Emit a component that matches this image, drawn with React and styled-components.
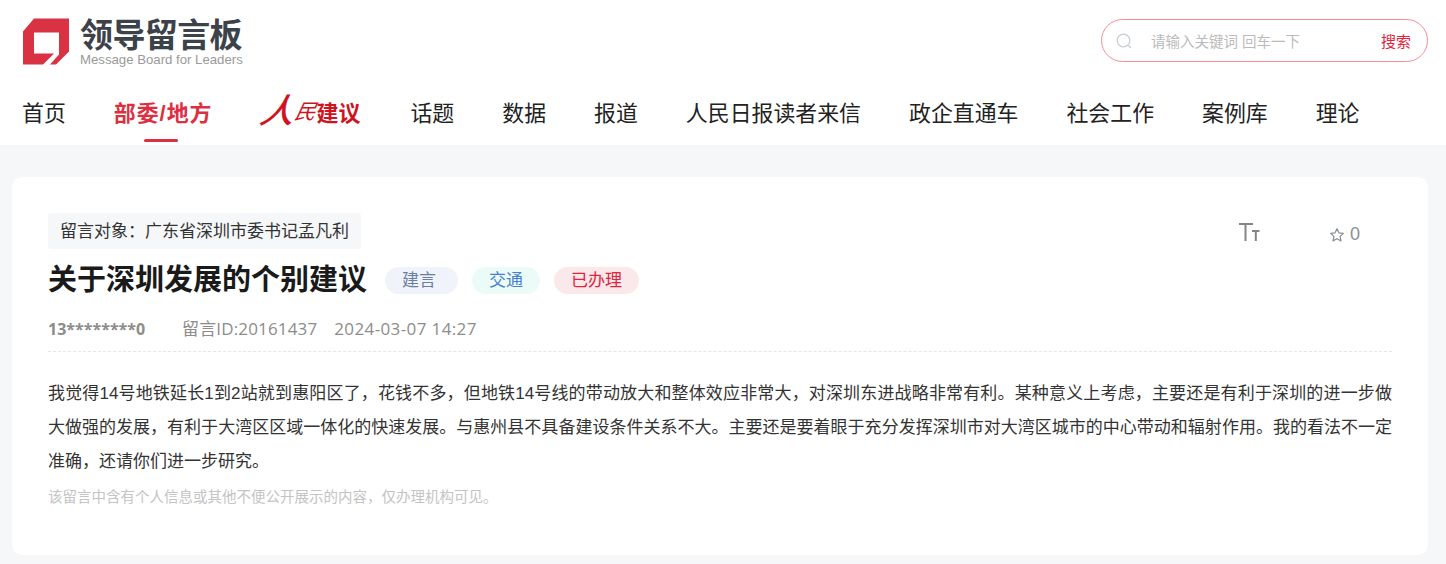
import React from "react";
import styled, { createGlobalStyle } from "styled-components";

const Global = createGlobalStyle`
  html, body { margin: 0; padding: 0; background: #f6f7f9; }
  body { font-family: "Liberation Sans", "Noto Sans CJK SC", sans-serif; color: #333; }
`;

const Page = styled.div`
  width: 1446px;
  height: 564px;
  overflow: hidden;
`;
const Header = styled.header`
  height: 145px;
  background: #fff;
  box-sizing: border-box;
  display: flex;
  flex-direction: column;
`;
const TopRow = styled.div`
  height: 83px;
  display: flex;
  justify-content: space-between;
  padding: 18px 18px 0 23px;
  box-sizing: border-box;
`;
const Logo = styled.div`
  display: flex;
  gap: 11px;
`;
const LogoText = styled.div`
  display: flex;
  flex-direction: column;
`;
const LogoCn = styled.div`
  font-size: 33px;
  line-height: 35px;
  font-weight: 700;
  color: #3c4249;
  letter-spacing: -0.6px;
  width: 164px;
  white-space: nowrap;
`;
const LogoEn = styled.div`
  font-size: 13.2px;
  line-height: 13px;
  color: #9a9a9a;
  white-space: nowrap;
`;
const Search = styled.div`
  width: 327px;
  height: 43px;
  margin-top: 1px;
  border: 1px solid #f58d97;
  border-radius: 22px;
  box-sizing: border-box;
  display: flex;
  align-items: center;
  padding: 0 16px 0 14px;
`;
const SearchHint = styled.div`
  flex: 1;
  margin-left: 19px;
  font-size: 14.5px;
  color: #bbb;
`;
const SearchBtn = styled.div`
  font-size: 15px;
  color: #e0243c;
`;
const Nav = styled.nav`
  display: flex;
  align-items: flex-start;
  gap: 48px;
  padding-left: 22px;
  height: 62px;
`;
const NavItem = styled.a`
  position: relative;
  font-size: 21.9px;
  line-height: 62px;
  height: 62px;
  color: ${(p) => (p.$active ? "#dc2f41" : "#222")};
  font-weight: ${(p) => (p.$active ? 700 : 400)};
  white-space: nowrap;
  ${(p) =>
    p.$active &&
    `letter-spacing: 1px;
    &::after {
      content: "";
      position: absolute;
      left: 50%;
      bottom: 3px;
      width: 34px;
      height: 3px;
      margin-left: -19px;
      background: #dc2f41;
      border-radius: 2px;
    }`}
`;
const PeopleLink = styled.a`
  width: 102px;
  padding-left: 1px;
  box-sizing: border-box;
  display: flex;
  align-items: center;
  height: 62px;
  color: #cf1322;
  white-space: nowrap;
  margin-top: -3px;
`;
const Script = styled.span`
  font-style: italic;
  font-size: ${(p) => p.$size}px;
  line-height: 1;
  font-weight: ${(p) => p.$weight};
  display: inline-block;
  transform: skewX(-12deg);
  margin-right: ${(p) => p.$gap}px;
`;
const PeopleTail = styled.span`
  font-size: 22px;
  font-weight: 700;
`;
const Main = styled.main`
  padding: 32px 18px 0 12px;
`;
const Card = styled.section`
  background: #fff;
  border-radius: 10px;
  height: 378px;
  box-sizing: border-box;
  padding: 36px;
`;
const TopLine = styled.div`
  display: flex;
  justify-content: space-between;
  align-items: flex-start;
`;
const Target = styled.div`
  height: 36px;
  line-height: 37px;
  padding: 0 12px;
  background: #f6f7f9;
  border-radius: 3px;
  font-size: 17px;
  color: #333;
`;
const Tools = styled.div`
  display: flex;
  align-items: flex-start;
  gap: 69px;
  margin: 10px 32px 0 0;
`;
const Star = styled.div`
  display: flex;
  align-items: center;
  gap: 5px;
  margin-top: 1px;
  font-size: 18px;
  color: #8a8f94;
`;
const TitleRow = styled.div`
  display: flex;
  align-items: center;
  margin-top: 11px;
  height: 40px;
`;
const Title = styled.h1`
  margin: 0 18px 0 0;
  font-size: 29px;
  line-height: 41px;
  font-weight: 700;
  color: #1a1a1a;
`;
const Tag = styled.span`
  height: 27px;
  line-height: 28px;
  padding: 0 ${(p) => p.$right || 17}px 0 17px;
  margin-right: 14px;
  border-radius: 14px;
  font-size: 17px;
  background: ${(p) => p.$bg};
  color: ${(p) => p.$fg};
`;
const Meta = styled.div`
  display: flex;
  margin-top: 14px;
  height: 30px;
  padding-bottom: 7px;
  line-height: 30px;
  font-size: 17px;
  font-family: "Open Sans", "Noto Sans CJK SC", sans-serif;
  color: #8c8c8c;
  border-bottom: 1px dashed #e6e6e6;
`;
const Author = styled.span`
  font-weight: 700;
  margin-right: 35px;
  width: 99px;
  white-space: nowrap;
  font-size: 16px;
`;
const MetaPiece = styled.span`
  margin-right: 17px;
  letter-spacing: ${(p) => p.$track}px;
`;
const Body = styled.p`
  margin: 25px 0 0;
  font-size: 17px;
  line-height: 34px;
  color: #333;
  text-align: justify;
`;
const Note = styled.p`
  margin: 6px 0 0;
  font-size: 14.5px;
  line-height: 24px;
  color: #c4c4c4;
`;

const LogoMark = () => (
  <svg width="46" height="47" viewBox="0 0 46 46">
    <path fill="#d93242" d="M11 0H46V33L33 46H27L36 36V14H11V35H31L20 46H0V13Z" />
  </svg>
);

const SearchIcon = () => (
  <svg width="16" height="16" viewBox="0 0 16 16" fill="none" stroke="#c9ced4" strokeWidth="1.3">
    <circle cx="7.5" cy="7.5" r="6.3" />
    <path d="M12.2 12.2L15 15" />
  </svg>
);

const TextSizeIcon = () => (
  <svg width="21" height="18" viewBox="0 0 21 18" fill="none" stroke="#858585">
    <path strokeWidth="2" d="M0 1H14M6.5 1V18" />
    <path strokeWidth="2" d="M13 8H20.5M16.8 8V18" />
  </svg>
);

const StarIcon = () => (
  <svg width="16" height="16" viewBox="0 0 24 24" fill="none" stroke="#8a8f94" strokeWidth="1.8" strokeLinejoin="round">
    <path d="M12 2.5l2.9 6.2 6.7.8-5 4.6 1.4 6.7L12 17.5l-6 3.3 1.4-6.7-5-4.6 6.7-.8z" />
  </svg>
);

const navRest = ["话题", "数据", "报道", "人民日报读者来信", "政企直通车", "社会工作", "案例库", "理论"];

export default function App() {
  return (
    <Page>
      <Global />
      <Header>
        <TopRow>
          <Logo>
            <LogoMark />
            <LogoText>
              <LogoCn>领导留言板</LogoCn>
              <LogoEn>Message Board for Leaders</LogoEn>
            </LogoText>
          </Logo>
          <Search>
            <SearchIcon />
            <SearchHint>请输入关键词 回车一下</SearchHint>
            <SearchBtn>搜索</SearchBtn>
          </Search>
        </TopRow>
        <Nav>
          <NavItem>首页</NavItem>
          <NavItem $active>部委/地方</NavItem>
          <PeopleLink>
            <Script $size={34} $gap={0} $weight={500}>人</Script>
            <Script $size={21} $gap={0} $weight={400}>民</Script>
            <PeopleTail>建议</PeopleTail>
          </PeopleLink>
          {navRest.map((t) => (
            <NavItem key={t}>{t}</NavItem>
          ))}
        </Nav>
      </Header>
      <Main>
        <Card>
          <TopLine>
            <Target>留言对象：广东省深圳市委书记孟凡利</Target>
            <Tools>
              <TextSizeIcon />
              <Star>
                <StarIcon />
                <span>0</span>
              </Star>
            </Tools>
          </TopLine>
          <TitleRow>
            <Title>关于深圳发展的个别建议</Title>
            <Tag $bg="#f0f3f9" $fg="#6c7fa3" $right={22}>建言</Tag>
            <Tag $bg="#ebfbf8" $fg="#4a7fd0">交通</Tag>
            <Tag $bg="#fae8ea" $fg="#e0243c">已办理</Tag>
          </TitleRow>
          <Meta>
            <Author>13********0</Author>
            <MetaPiece $track={0.15}>留言ID:20161437</MetaPiece>
            <MetaPiece $track={0.38}>2024-03-07 14:27</MetaPiece>
          </Meta>
          <Body>
            我觉得14号地铁延长1到2站就到惠阳区了，花钱不多，但地铁14号线的带动放大和整体效应非常大，对深圳东进战略非常有利。某种意义上考虑，主要还是有利于深圳的进一步做大做强的发展，有利于大湾区区域一体化的快速发展。与惠州县不具备建设条件关系不大。主要还是要着眼于充分发挥深圳市对大湾区城市的中心带动和辐射作用。我的看法不一定准确，还请你们进一步研究。
          </Body>
          <Note>该留言中含有个人信息或其他不便公开展示的内容，仅办理机构可见。</Note>
        </Card>
      </Main>
    </Page>
  );
}
